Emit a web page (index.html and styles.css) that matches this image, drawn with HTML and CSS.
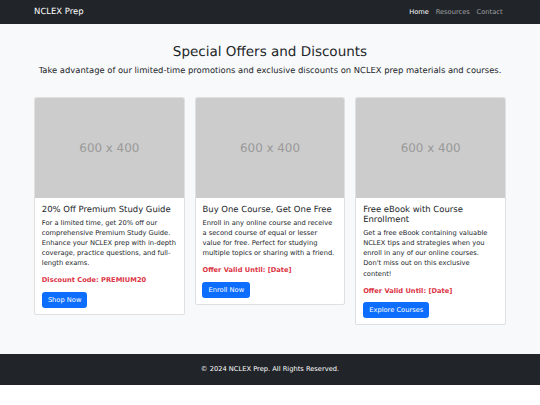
FILE: index.html
```html
<!DOCTYPE html>
<html lang="en">
<head>
<meta charset="utf-8">
<title>NCLEX Prep - Special Offers</title>
<link rel="stylesheet" href="styles.css">
</head>
<body>
<nav class="navbar">
  <div class="container nav-inner">
    <a class="brand" href="#">NCLEX Prep</a>
    <ul class="nav-links">
      <li><a class="active" href="#">Home</a></li>
      <li><a href="#">Resources</a></li>
      <li><a href="#">Contact</a></li>
    </ul>
  </div>
</nav>
<main class="main">
  <div class="container">
    <div class="header">
      <h2 class="title">Special Offers and Discounts</h2>
      <p class="lead">Take advantage of our limited-time promotions and exclusive discounts on NCLEX prep materials and courses.</p>
    </div>
    <div class="cards">
      <div class="col">
        <div class="card">
          <div class="placeholder">600 x 400</div>
          <div class="card-body">
            <h5 class="card-title">20% Off Premium Study Guide</h5>
            <p class="card-text">For a limited time, get 20% off our comprehensive Premium Study Guide. Enhance your NCLEX prep with in-depth coverage, practice questions, and full-length exams.</p>
            <p class="card-text danger">Discount Code: PREMIUM20</p>
            <a href="#" class="btn">Shop Now</a>
          </div>
        </div>
      </div>
      <div class="col">
        <div class="card">
          <div class="placeholder">600 x 400</div>
          <div class="card-body">
            <h5 class="card-title">Buy One Course, Get One Free</h5>
            <p class="card-text">Enroll in any online course and receive a second course of equal or lesser value for free. Perfect for studying multiple topics or sharing with a friend.</p>
            <p class="card-text danger">Offer Valid Until: [Date]</p>
            <a href="#" class="btn">Enroll Now</a>
          </div>
        </div>
      </div>
      <div class="col">
        <div class="card">
          <div class="placeholder">600 x 400</div>
          <div class="card-body">
            <h5 class="card-title">Free eBook with Course Enrollment</h5>
            <p class="card-text">Get a free eBook containing valuable NCLEX tips and strategies when you enroll in any of our online courses. Don't miss out on this exclusive content!</p>
            <p class="card-text danger">Offer Valid Until: [Date]</p>
            <a href="#" class="btn">Explore Courses</a>
          </div>
        </div>
      </div>
    </div>
  </div>
</main>
<footer class="footer">
  <p>&copy; 2024 NCLEX Prep. All Rights Reserved.</p>
</footer>
</body>
</html>
```
FILE: styles.css
```css
* { box-sizing: border-box; }
html, body { margin: 0; padding: 0; }
body {
  font-family: "DejaVu Sans", sans-serif;
  font-size: 6.7px;
  line-height: 10.15px;
  color: #212529;
  background: #fff;
  text-rendering: geometricPrecision;
}
a { text-decoration: none; }
.container {
  width: 482px;
  margin: 0 auto;
  padding: 0 5.07px;
}
.navbar {
  background: #212529;
  height: 23.7px;
  display: flex;
  align-items: center;
}
.nav-inner {
  display: flex;
  align-items: center;
  justify-content: space-between;
}
.brand {
  color: #fff;
  font-size: 8.46px;
  line-height: 12.7px;
}
.nav-links {
  list-style: none;
  margin: 0;
  padding: 0;
  display: flex;
}
.nav-links a {
  display: block;
  padding: 0 3.38px;
  color: rgba(255,255,255,.55);
}
.nav-links a.active { color: #fff; }
.main {
  background: #f8f9fa;
  padding: 20.3px 0 18.5px;
}
.header {
  text-align: center;
  margin-bottom: 20.3px;
}
.title {
  margin: 0 0 3.38px;
  font-size: 13.53px;
  font-weight: 500;
  line-height: 1.2;
}
.lead {
  margin: 0;
  font-size: 8.4px;
  line-height: 12.7px;
  font-weight: 400;
}
.cards {
  display: grid;
  grid-template-columns: repeat(3, 1fr);
  column-gap: 10.15px;
  align-items: start;
}
.col { margin-bottom: 10.15px; }
.card {
  background: #fff;
  border: 1px solid rgba(0,0,0,.12);
  border-radius: 2.5px;
  overflow: hidden;
}
.placeholder {
  height: 100px;
  background: #cccccc;
  color: #999;
  font-size: 11.9px;
  display: flex;
  align-items: center;
  justify-content: center;
}
.card-body { padding: 6.76px 6.76px 6px; }
.card-title {
  margin: 0 0 3.38px;
  font-size: 8.46px;
  font-weight: 500;
  line-height: 1.2;
}
.card-text { margin: 0 0 6.76px; }
.danger { color: #dc3545; font-weight: 700; }
.btn {
  display: inline-block;
  background: #0d6efd;
  color: #fff;
  border: 1px solid #0d6efd;
  border-radius: 2.5px;
  padding: 2px 5.07px;
  line-height: 10px;
}
.footer {
  background: #212529;
  color: #fff;
  text-align: center;
  padding: 10.15px 0;
}
.footer p { margin: 0; line-height: 10.15px; }
```
